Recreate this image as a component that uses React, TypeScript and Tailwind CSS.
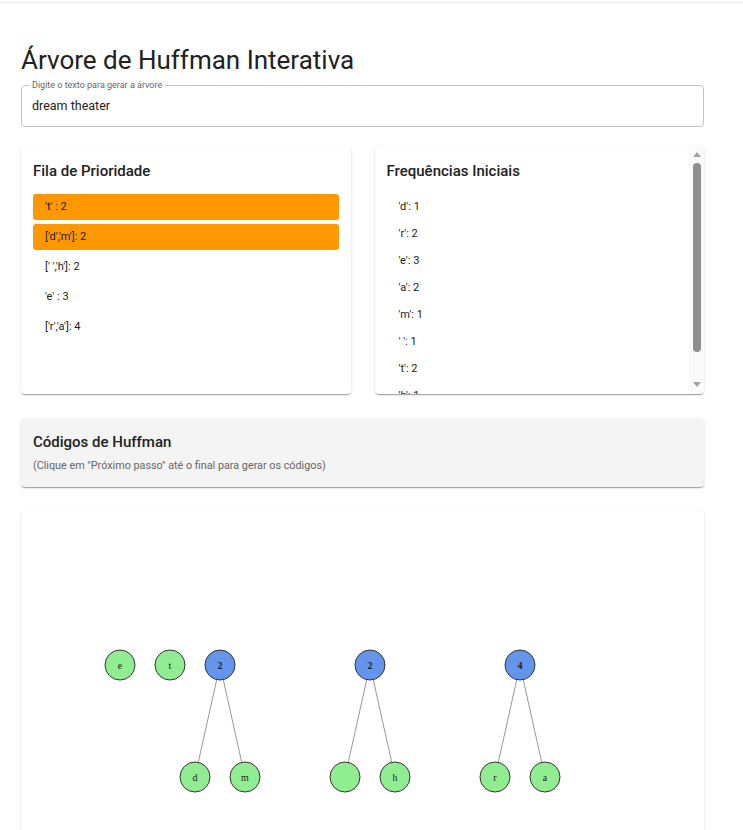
import React from "react";

const fila = [
  { label: "'t' : 2", active: true },
  { label: "['d','m']: 2", active: true },
  { label: "[' ','h']: 2", active: false },
  { label: "'e' : 3", active: false },
  { label: "['r','a']: 4", active: false },
];

const freqs = ["'d': 1", "'r': 2", "'e': 3", "'a': 2", "'m': 1", "' ': 1", "'t': 2", "'h': 1"];

type Node = { x: number; y: number; label: string; internal?: boolean };

// positions relative to the tree card
const nodes: Node[] = [
  { x: 99, y: 154, label: "e" },
  { x: 149, y: 154, label: "t" },
  { x: 199, y: 154, label: "2", internal: true },
  { x: 174, y: 266, label: "d" },
  { x: 224, y: 266, label: "m" },
  { x: 349, y: 154, label: "2", internal: true },
  { x: 324, y: 266, label: "" },
  { x: 374, y: 266, label: "h" },
  { x: 499, y: 154, label: "4", internal: true },
  { x: 474, y: 266, label: "r" },
  { x: 524, y: 266, label: "a" },
];

const edges: [number, number][] = [
  [2, 3],
  [2, 4],
  [5, 6],
  [5, 7],
  [8, 9],
  [8, 10],
];

const cardShadow =
  "shadow-[0px_2px_1px_-1px_rgba(0,0,0,0.2),0px_1px_1px_0px_rgba(0,0,0,0.14),0px_1px_3px_0px_rgba(0,0,0,0.12)]";

const App: React.FC = () => {
  return (
    <div className="min-h-screen bg-white font-['Roboto',sans-serif] text-[#212121]">
      {/* faint top bar */}
      <div className="h-[3px] border-b border-[#f0f0f0]" />

      <div className="px-[21px] pt-[41px] w-[683px] box-content">
        <h1 className="text-[26px] leading-[32px] font-normal">Árvore de Huffman Interativa</h1>

        {/* Text field */}
        <fieldset className="mt-[5px] border border-[#c4c4c4] rounded-[4px] px-[7px] h-[46px]">
          <legend className="px-[3px] text-[9px] leading-[9px] text-[#666]">Digite o texto para gerar a árvore</legend>
          <div className="pl-[3px] text-[12.5px] leading-[32px] text-[#222]">dream theater</div>
        </fieldset>

        {/* Two cards */}
        <div className="mt-[19px] grid grid-cols-2 gap-[24px]">
          <div className={`bg-white rounded-[4px] h-[248px] px-[12px] pt-[13px] ${cardShadow}`}>
            <h2 className="text-[15px] leading-[24px] font-medium">Fila de Prioridade</h2>
            <ul className="mt-[11px] flex flex-col gap-[4px]">
              {fila.map((f) => (
                <li
                  key={f.label}
                  className={`h-[26px] flex items-center pl-[12px] rounded-[3px] text-[11px] ${
                    f.active ? "bg-[#ff9800]" : ""
                  }`}
                >
                  {f.label}
                </li>
              ))}
            </ul>
          </div>

          <div className={`bg-white rounded-[4px] h-[248px] flex overflow-hidden ${cardShadow}`}>
            <div className="flex-1 overflow-hidden px-[12px] pt-[13px]">
              <h2 className="text-[15px] leading-[24px] font-medium">Frequências Iniciais</h2>
              <ul className="mt-[11px]">
                {freqs.map((f) => (
                  <li key={f} className="h-[27px] flex items-center pl-[12px] text-[11px]">
                    {f}
                  </li>
                ))}
              </ul>
            </div>
            {/* scrollbar */}
            <div className="w-[15px] bg-[#fafafa] flex flex-col items-center">
              <div className="h-[15px] flex items-center justify-center pt-[1px]">
                <div className="w-0 h-0 border-l-[4.5px] border-r-[4.5px] border-b-[5px] border-l-transparent border-r-transparent border-b-[#a3a3a3]" />
              </div>
              <div className="flex-1 w-full flex flex-col items-center pt-[2px]">
                <div className="w-[8px] h-[189px] rounded-full bg-[#8f8f8f]" />
              </div>
              <div className="h-[15px] flex items-center justify-center pb-[4px]">
                <div className="w-0 h-0 border-l-[4.5px] border-r-[4.5px] border-t-[5px] border-l-transparent border-r-transparent border-t-[#a3a3a3]" />
              </div>
            </div>
          </div>
        </div>

        {/* Codes */}
        <div className={`mt-[24px] bg-[#f4f4f4] rounded-[4px] px-[12px] pt-[12px] pb-[13px] ${cardShadow}`}>
          <h2 className="text-[15px] leading-[24px] font-medium">Códigos de Huffman</h2>
          <p className="mt-[4px] text-[10.8px] leading-[16px] text-[#666]">
            (Clique em "Próximo passo" até o final para gerar os códigos)
          </p>
        </div>

        {/* Tree */}
        <div className={`mt-[24px] bg-white rounded-[4px] h-[420px] ${cardShadow}`}>
          <svg width="683" height="420" className="block">
            {edges.map(([a, b], i) => (
              <line
                key={i}
                x1={nodes[a].x}
                y1={nodes[a].y}
                x2={nodes[b].x}
                y2={nodes[b].y}
                stroke="#999"
                strokeWidth={1}
              />
            ))}
            {nodes.map((n, i) => (
              <g key={i}>
                <circle
                  cx={n.x}
                  cy={n.y}
                  r={15}
                  fill={n.internal ? "#6495ed" : "#90ee90"}
                  stroke="#333"
                  strokeWidth={1}
                />
                <text
                  x={n.x}
                  y={n.y + 3.5}
                  textAnchor="middle"
                  fontFamily="'Liberation Serif', serif"
                  fontSize={10}
                  fontWeight={n.internal ? 700 : 400}
                  fill="#222"
                >
                  {n.label}
                </text>
              </g>
            ))}
          </svg>
        </div>
      </div>
    </div>
  );
};

export default App;
